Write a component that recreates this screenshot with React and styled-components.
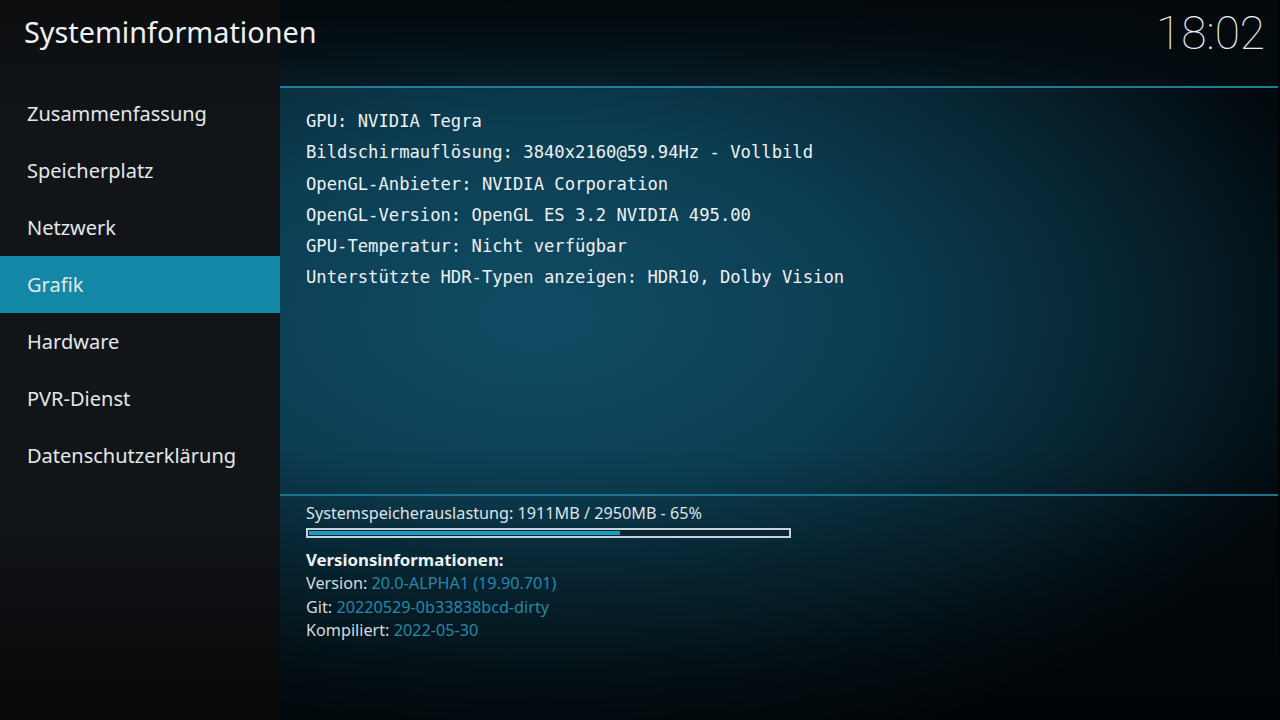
import React from 'react'
import styled, { createGlobalStyle } from 'styled-components'

const Global = createGlobalStyle`
  html, body { margin: 0; padding: 0; }
  body {
    width: 1280px;
    height: 720px;
    overflow: hidden;
    background: #03070a;
    font-family: "Noto Sans", "Open Sans", sans-serif;
  }
`

const menu = [
  'Zusammenfassung',
  'Speicherplatz',
  'Netzwerk',
  'Grafik',
  'Hardware',
  'PVR-Dienst',
  'Datenschutzerklärung',
]

const infoLines = [
  'GPU: NVIDIA Tegra',
  'Bildschirmauflösung: 3840x2160@59.94Hz - Vollbild',
  'OpenGL-Anbieter: NVIDIA Corporation',
  'OpenGL-Version: OpenGL ES 3.2 NVIDIA 495.00',
  'GPU-Temperatur: Nicht verfügbar',
  'Unterstützte HDR-Typen anzeigen: HDR10, Dolby Vision',
]

const versions = [
  ['Version:', '20.0-ALPHA1 (19.90.701)'],
  ['Git:', '20220529-0b33838bcd-dirty'],
  ['Kompiliert:', '2022-05-30'],
]

function App() {
  return (
    <>
      <Global />
      <Screen>
        <Sidebar>
          <Title>Systeminformationen</Title>
          <Menu>
            {menu.map((m) => (
              <MenuItem key={m} $active={m === 'Grafik'}>{m}</MenuItem>
            ))}
          </Menu>
        </Sidebar>
        <Main>
          <Header>
            <Clock>18:02</Clock>
          </Header>
          <Info>
            {infoLines.map((l) => (
              <InfoLine key={l}>{l}</InfoLine>
            ))}
          </Info>
          <Footer>
            <MemLabel>Systemspeicherauslastung: 1911MB / 2950MB - 65%</MemLabel>
            <Bar>
              <BarFill style={{ width: '65%' }} />
            </Bar>
            <VersionTitle>Versionsinformationen:</VersionTitle>
            {versions.map(([k, v]) => (
              <VersionRow key={k}>
                {k} <Value>{v}</Value>
              </VersionRow>
            ))}
          </Footer>
        </Main>
      </Screen>
    </>
  )
}

export default App

const Screen = styled.div`
  display: grid;
  grid-template-columns: 280px 1fr;
  width: 1280px;
  height: 720px;
  background:
    radial-gradient(ellipse 820px 460px at 42% 44%, #0f4c64 0%, #0c3e53 40%, #072633 70%, #02090d 100%);
`

const Sidebar = styled.div`
  display: flex;
  flex-direction: column;
  background: linear-gradient(180deg, #0b0d0f 0%, #121518 18%, #121518 70%, #07080a 100%);
`

const Title = styled.h1`
  position: relative;
  z-index: 2;
  margin: 0;
  height: 85px;
  box-sizing: border-box;
  padding: 12px 0 0 24px;
  font-size: 28.8px;
  font-weight: 400;
  color: #eef1f3;
  white-space: nowrap;
`

const Menu = styled.ul`
  list-style: none;
  margin: 0;
  padding: 0;
`

const MenuItem = styled.li`
  height: 57px;
  display: flex;
  align-items: center;
  padding-left: 27px;
  font-size: 20px;
  color: #e4e7ea;
  background: ${(p) => (p.$active ? '#1287a6' : 'transparent')};
`

const Main = styled.div`
  display: flex;
  flex-direction: column;
  border-right: 2px solid #010405;
  background: linear-gradient(180deg, rgba(0,0,0,0) 62%, rgba(0,0,0,0.55) 100%);
`

const Header = styled.div`
  height: 88px;
  box-sizing: border-box;
  display: flex;
  justify-content: flex-end;
  align-items: flex-start;
  padding-right: 13px;
  border-bottom: 2px solid #1b7f9b;
  background: linear-gradient(180deg, #03080b 0%, rgba(3, 12, 16, 0.6) 100%);
`

const Clock = styled.div`
  font-family: Roboto, "Noto Sans", sans-serif;
  font-weight: 100;
  font-size: 46px;
  line-height: 1;
  margin-top: 10px;
  color: #eef1f3;
`

const Info = styled.div`
  flex: 1;
  padding: 18px 0 0 26px;
  border-bottom: 2px solid #1b7390;
`

const InfoLine = styled.div`
  font-family: "DejaVu Sans Mono", "Liberation Mono", monospace;
  font-size: 17.2px;
  line-height: 31.3px;
  color: #eef1f3;
  white-space: nowrap;
`

const Footer = styled.div`
  height: 224px;
  box-sizing: border-box;
  padding: 6px 0 0 26px;
`

const MemLabel = styled.div`
  font-size: 16.2px;
  line-height: 22px;
  color: #dfe4e7;
`

const Bar = styled.div`
  width: 479px;
  height: 4px;
  margin-top: 4px;
  padding: 1px;
  border: 2px solid #c9d2d6;
  box-sizing: content-box;
  background: #0a2634;
`

const BarFill = styled.div`
  height: 100%;
  background: #1a9ac6;
`

const VersionTitle = styled.div`
  margin-top: 10px;
  font-size: 16.8px;
  font-weight: 700;
  line-height: 24px;
  color: #eef1f3;
`

const VersionRow = styled.div`
  font-size: 16.2px;
  line-height: 23.5px;
  color: #d5dbde;
`

const Value = styled.span`
  color: #2788a9;
`
